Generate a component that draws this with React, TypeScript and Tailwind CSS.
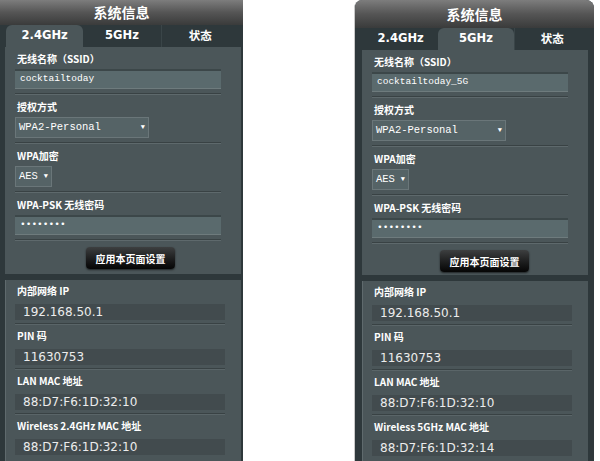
import React from 'react';

type Props = {
  active: number;
  ssid: string;
  wirelessLabel: string;
  wirelessMac: string;
  headerH: number;
  rounded?: boolean;
  btnMl: number;
  btnPb: number;
  padL: number;
  padR: number;
};

const cjk = { fontFamily: '"Noto Sans CJK SC", "Liberation Sans", sans-serif' };
const mono = { fontFamily: '"Liberation Mono", "DejaVu Sans Mono", monospace' };
const sans = { fontFamily: '"DejaVu Sans", "Liberation Sans", sans-serif' };

const tabs = ['2.4GHz', '5GHz', '状态'];

const Sep = () => (
  <div className="mt-[4px] h-[2px] border-t border-[#394244] border-b-[#5e696c] border-b" />
);

const Label = ({ children }: { children: React.ReactNode }) => (
  <div className="h-[14px] pl-[2px] text-[10px] font-bold leading-[14px] text-white" style={cjk}>
    {children}
  </div>
);

const Field = ({ label, children }: { label: string; children: React.ReactNode }) => (
  <div className="pt-[5px]">
    <Label>{label}</Label>
    <div className="mt-[3px]">{children}</div>
    <Sep />
  </div>
);

const Input = ({ value }: { value: string }) => (
  <div
    className="flex h-[20px] items-center border-t-2 border-t-[#3c4749] border-b border-b-[#6e7b7d] bg-[#5a6a6d] px-[5px] text-[9.5px] text-white"
    style={mono}
  >
    {value}
  </div>
);

const Select = ({ value, w }: { value: string; w: string }) => (
  <div
    className={`flex h-[21px] items-center justify-between border border-[#6a7679] bg-[#556366] px-[3px] text-[10.5px] text-white ${w}`}
    style={mono}
  >
    <span>{value}</span>
    <span className="text-[7px]">▼</span>
  </div>
);

const Info = ({ label, value, last }: { label: string; value: string; last?: boolean }) => (
  <div className="pt-[4px]">
    <Label>{label}</Label>
    <div
      className="mt-[6px] flex h-[16px] items-center bg-[#424b4e] px-[8px] text-[12px] text-[#ececec]"
      style={sans}
    >
      {value}
    </div>
    {!last && <div className="mt-[3px] h-[2px] border-t border-[#394244] border-b border-b-[#5a6568]" />}
  </div>
);

const Panel = ({ active, ssid, wirelessLabel, wirelessMac, headerH, rounded, btnMl, btnPb, padL, padR }: Props) => (
  <div
    className={`flex h-[461px] w-full flex-col overflow-hidden bg-[#2e383b] ${rounded ? 'rounded-t-[8px] border-l border-[#c9c9c9]' : ''}`}
  >
    <div
      className="flex shrink-0 items-center justify-center bg-gradient-to-b from-[#7d7d7d] via-[#555] to-[#3a3b3b] text-[14px] font-bold text-white"
      style={{ height: headerH, ...cjk }}
    >
      系统信息
    </div>
    <div className="flex h-[22px] shrink-0 pr-[4px]" style={{ paddingLeft: padL }}>
      {tabs.map((t, i) => (
        <div
          key={t}
          className={`flex flex-1 items-center justify-center text-[11.5px] font-bold text-white ${
            i === active ? 'rounded-t-[6px] bg-[#4b5659]' : i === 2 ? 'border-l border-[#3a4548]' : ''
          }`}
          style={i === 2 ? cjk : sans}
        >
          {t}
        </div>
      ))}
    </div>
    <div className="flex flex-1 flex-col" style={{ marginLeft: padL - 1, marginRight: padR }}>
      <div className="bg-[#4b5659] pl-[10px] pr-[20px]">
        <Field label="无线名称（SSID）">
          <Input value={ssid} />
        </Field>
        <Field label="授权方式">
          <Select value="WPA2-Personal" w="w-[134px]" />
        </Field>
        <Field label="WPA加密">
          <Select value="AES" w="w-[37px]" />
        </Field>
        <Field label="WPA-PSK 无线密码">
          <Input value="••••••••" />
        </Field>
        <div className="pt-[6px]" style={{ paddingBottom: btnPb }}>
          <div
            className="flex h-[22px] w-[89px] items-center justify-center rounded-[4px] bg-gradient-to-b from-[#3d3f40] to-[#060606] text-[10px] font-bold text-white shadow-[0_1px_2px_rgba(0,0,0,0.6)]"
            style={{ marginLeft: btnMl, ...cjk }}
          >
            应用本页面设置
          </div>
        </div>
      </div>
      <div className="h-[6px] shrink-0 bg-[#2e383b]" />
      <div className="flex-1 border-l border-[#5f6a6d] bg-[#4b5659] pl-[9px] pr-[16px]">
        <Info label="内部网络 IP" value="192.168.50.1" />
        <Info label="PIN 码" value="11630753" />
        <Info label="LAN MAC 地址" value="88:D7:F6:1D:32:10" />
        <Info label={wirelessLabel} value={wirelessMac} last />
      </div>
    </div>
  </div>
);

export default function App() {
  return (
    <div className="flex h-[461px] w-[600px] overflow-hidden bg-white">
      <div className="w-[243px] shrink-0">
        <Panel
          active={0}
          ssid="cocktailtoday"
          wirelessLabel="Wireless 2.4GHz MAC 地址"
          wirelessMac="88:D7:F6:1D:32:10"
          headerH={25}
          btnMl={71}
          btnPb={5}
          padL={6}
          padR={2}
        />
      </div>
      <div className="ml-[111px] w-[240px] shrink-0">
        <Panel
          active={1}
          ssid="cocktailtoday_5G"
          wirelessLabel="Wireless 5GHz MAC 地址"
          wirelessMac="88:D7:F6:1D:32:14"
          headerH={28}
          rounded
          btnMl={68}
          btnPb={3}
          padL={8}
          padR={6}
        />
      </div>
    </div>
  );
}
